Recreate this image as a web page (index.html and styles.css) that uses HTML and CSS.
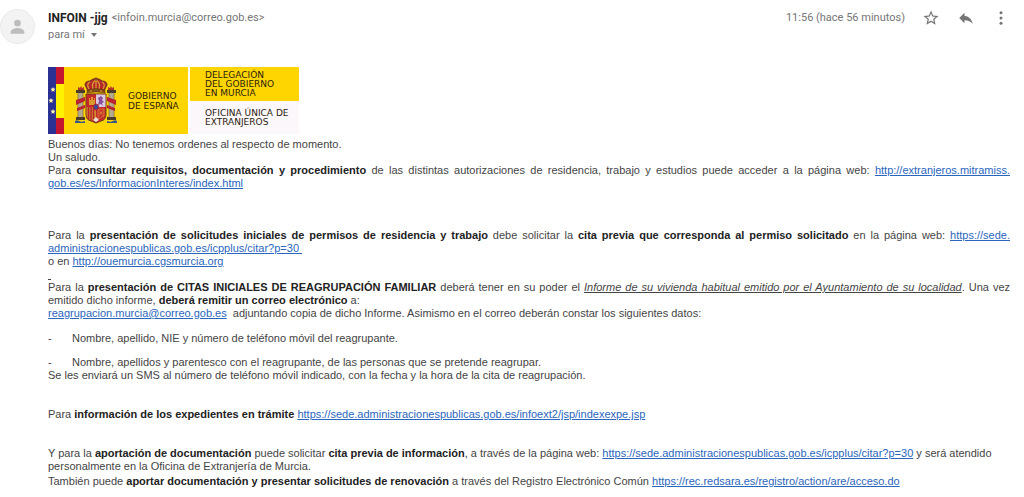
FILE: index.html
```html
<!DOCTYPE html>
<html lang="es">
<head>
    <meta charset="utf-8">
    <title>INFOIN -jjg</title>
    <link rel="stylesheet" href="styles.css">
</head>
<body>
    <header class="mail-header">
        <svg class="avatar" viewBox="0 0 36 36" aria-hidden="true">
            <circle cx="18" cy="18" r="17.5" fill="#f3f3f3" stroke="#e8e8e8"/>
            <circle cx="18" cy="14.500" r="3.500" fill="#bdbdbd"/>
            <path d="M11 25.500v-2c0-2.800 4.600-4 7-4s7 1.200 7 4v2z" fill="#bdbdbd"/>
        </svg>

        <div class="sender">
            <div class="sender-line"><b class="sender-name">INFOIN -jjg</b> <span class="sender-mail">&lt;infoin.murcia@correo.gob.es&gt;</span></div>
            <button type="button" class="details">para mí <span class="caret"></span></button>
        </div>

        <div class="tools">
            <span class="date">11:56 (hace 56 minutos)</span>
            <button type="button" class="icon" aria-label="Destacar">
                <svg viewBox="0 0 24 24"><path d="M22 9.240l-7.190-.62L12 2 9.190 8.630 2 9.240l5.460 4.730L5.820 21 12 17.270 18.180 21l-1.630-7.030L22 9.240zM12 15.400l-3.760 2.270 1-4.280-3.320-2.880 4.380-.38L12 6.100l1.710 4.040 4.380.38-3.320 2.880 1 4.280L12 15.400z"/></svg>
            </button>
            <button type="button" class="icon" aria-label="Responder">
                <svg viewBox="0 0 24 24"><path d="M10 9V5l-7 7 7 7v-4.100c5 0 8.500 1.600 11 5.100-1-5-4-10-11-11z"/></svg>
            </button>
            <button type="button" class="icon" aria-label="Más">
                <svg viewBox="0 0 24 24"><circle cx="12" cy="5" r="2"/><circle cx="12" cy="12" r="2"/><circle cx="12" cy="19" r="2"/></svg>
            </button>
        </div>
    </header>

    <main class="mail-body">
        <div class="logo">
            <div class="logo-left">
                <svg class="flag" viewBox="0 0 16 67" aria-hidden="true">
                    <rect width="9" height="67" fill="#2b3192"/>
                    <rect x="8" width="8" height="67" fill="#fff200"/>
                    <rect x="8" width="8" height="17" fill="#c4162f"/>
                    <rect x="8" y="51" width="8" height="16" fill="#c4162f"/>
                    <g fill="#fff3b0">
                        <path id="star" d="M5 20l.7 1.600 1.800.2-1.300 1.200.4 1.800L5 23.900l-1.600.9.400-1.800-1.300-1.200 1.800-.2z"/>
                        <use href="#star" x="-2" y="11"/>
                        <use href="#star" y="22"/>
                    </g>
                </svg>
                <svg class="shield" viewBox="0 0 44 48" aria-hidden="true">
                    <!-- columns -->
                    <g id="column">
                        <rect x="4" y="15" width="5" height="26" fill="#b5ab90" stroke="#665a3a" stroke-width=".6"/>
                        <rect x="2" y="13" width="9" height="3" fill="#4c3c26"/>
                        <path d="M4 13v-3l2 1 1-2 1 2 2-1v3z" fill="#b5342a"/>
                        <path d="M2 23l9-3v4l-9 4zM3 31l8-3v3l-8 3z" fill="#b8232f"/>
                        <rect x="2" y="40" width="9" height="3" fill="#4c3c26"/>
                        <path d="M1 44q2-1.500 4 0t6 0v2H1z" fill="#35558a"/>
                    </g>
                    <use href="#column" transform="translate(44 0) scale(-1 1)"/>
                    <!-- crown -->
                    <path d="M14 14l-3-6q0-4 5-4 3-3 6-2 3-1 6 2 5 0 5 4l-3 6z" fill="#b5272a" stroke="#6b3a12"/>
                    <path d="M15 12q-3-5 1-7M19 12q-2-6 3-9 5 3 3 9M29 12q3-5-1-7M22 3v10" fill="none" stroke="#d9a032" stroke-width="1.200"/>
                    <path d="M13 13q9-3 18 0v3q-9-2-18 0z" fill="#8b4b18" stroke="#5b300f" stroke-width=".5"/>
                    <path d="M22 0v4M20.500 1.500h3" stroke="#76501a"/>
                    <circle cx="17" cy="14" r=".7" fill="#e8c13a"/><circle cx="22" cy="13.500" r=".7" fill="#3a6b3a"/><circle cx="27" cy="14" r=".7" fill="#e8c13a"/>
                    <!-- quarters -->
                    <path d="M12 17h20v20q0 6-5 7l-5 2-5-2q-5-1-5-7z" fill="#c6262e" stroke="#6a3a1a"/>
                    <path d="M15 28v-7h1v2h1v-3h2v3h1v-2h1v7z" fill="#d99a2b"/>
                    <rect x="22" y="17.500" width="9.500" height="12.500" fill="#d9cbe0"/>
                    <path d="M24 28l1-4-1-3 3-2 2 2-1 2 2 2-2 1 1 3-2-2z" fill="#894f9b"/>
                    <path d="M12.500 30H22v14.500l-5-1.500q-4.500-1-4.500-6z" fill="#d08a2d"/>
                    <path d="M14.500 30v12M17 30v13M19.500 30v14" stroke="#bb252c" stroke-width="1.500"/>
                    <path d="M24 32h6v7l-6 3zM24 32l6 8M30 32l-6 8M24 36h6" fill="none" stroke="#d68a30" stroke-width=".7"/>
                    <path d="M19 43l3-3 3 3-3 2z" fill="#e8dfcf"/>
                    <ellipse cx="22" cy="30" rx="2.500" ry="3" fill="#394b9b" stroke="#b5232b"/>
                </svg>
                <span>GOBIERNO<br>DE ESPAÑA</span>
            </div>
            <div class="logo-right">
                <div class="delegation">DELEGACIÓN<br>DEL GOBIERNO<br>EN MURCIA</div>
                <div class="office">OFICINA ÚNICA DE<br>EXTRANJEROS</div>
            </div>
        </div>

        <p>Buenos días: No tenemos ordenes al respecto de momento.<br>Un saludo.</p>
        <p class="justified">Para <b>consultar requisitos, documentación y procedimiento</b> de las distintas autorizaciones de residencia, trabajo y estudios puede acceder a la página web: <a href="http://extranjeros.mitramiss.gob.es/es/InformacionInteres/index.html">http://extranjeros.mitramiss.<wbr>gob.es/es/InformacionInteres/index.html</a></p>

        <p class="justified space-large">Para la <b>presentación de solicitudes iniciales de permisos de residencia y trabajo</b> debe solicitar la <b>cita previa que corresponda al permiso solicitado</b> en la página web: <a href="https://sede.administracionespublicas.gob.es/icpplus/citar?p=30">https://sede.<wbr>administracionespublicas.gob.es/icpplus/citar?p=30&nbsp;</a></p>
        <p>o en <a href="http://ouemurcia.cgsmurcia.org">http://ouemurcia.cgsmurcia.org</a></p>
        <p><u>&nbsp;</u></p>
        <p class="justified">Para la <b>presentación de CITAS INICIALES DE REAGRUPACIÓN FAMILIAR</b> deberá tener en su poder el <u><i>Informe de su vivienda habitual emitido por el Ayuntamiento de su localidad</i></u>. Una vez emitido dicho informe, <b>deberá remitir un correo electrónico</b> a:</p>
        <p><a href="mailto:reagrupacion.murcia@correo.gob.es">reagrupacion.murcia@correo.gob.es</a>&nbsp; adjuntando copia de dicho Informe. Asimismo en el correo deberán constar los siguientes datos:</p>

        <ul class="requirements">
            <li>Nombre, apellido, NIE y número de teléfono móvil del reagrupante.</li>
            <li>Nombre, apellidos y parentesco con el reagrupante, de las personas que se pretende reagrupar.</li>
        </ul>
        <p>Se les enviará un SMS al número de teléfono móvil indicado, con la fecha y la hora de la cita de reagrupación.</p>

        <p class="space">Para <b>información de los expedientes en trámite</b> <a href="https://sede.administracionespublicas.gob.es/infoext2/jsp/indexexpe.jsp">https://sede.administracionespublicas.gob.es/infoext2/jsp/indexexpe.jsp</a></p>

        <p class="space">Y para la <b>aportación de documentación</b> puede solicitar <b>cita previa de información</b>, a través de la página web: <a href="https://sede.administracionespublicas.gob.es/icpplus/citar?p=30">https://sede.administracionespublicas.gob.es/icpplus/citar?p=30</a> y será atendido personalmente en la Oficina de Extranjería de Murcia.</p>
        <p class="last">También puede <b>aportar documentación y presentar solicitudes de renovación</b> a través del Registro Electrónico Común <a href="https://rec.redsara.es/registro/action/are/acceso.do">https://rec.redsara.es/registro/action/are/acceso.do</a></p>
    </main>
</body>
</html>
```
FILE: styles.css
```css
body {
    margin: 0;
    background: #fff;
    color: #444;
    font-family: "Liberation Sans", Arial, sans-serif;
    font-size: 11px;
    line-height: 13px;
}

button {
    padding: 0;
    border: 0;
    background: none;
    font: inherit;
    color: inherit;
    cursor: pointer;
}

.mail-header {
    display: flex;
    align-items: flex-start;
    padding: 9px 14px 0 0;
    font-family: Roboto, Arial, sans-serif;
    color: #757575;
}

.avatar {
    width: 35px;
    height: 35px;
    margin-right: 13px;
}

.sender {
    flex: 1;
    line-height: 18px;
}

.sender-line {
    display: flex;
    gap: 4px;
}

.sender-name {
    font-size: 12px;
    color: #222;
}

.details {
    display: flex;
    align-items: center;
    gap: 6px;
    line-height: 16px;
}

.caret {
    border: 3px solid transparent;
    border-top: 4px solid #757575;
    border-bottom: 0;
}

.tools {
    display: flex;
    align-items: center;
    gap: 17px;
    line-height: 18px;
}

.icon {
    display: flex;
}

.icon svg {
    width: 18px;
    height: 18px;
    fill: #757575;
}

.mail-body {
    padding: 23px 14px 0 48px;
}

.logo {
    display: flex;
    width: 251px;
    height: 67px;
    margin-bottom: 4px;
    gap: 2px;
    font-family: "DejaVu Sans", Verdana, sans-serif;
    font-size: 9px;
    line-height: 9px;
    color: #2b220c;
}

.logo-left {
    display: flex;
    align-items: center;
    width: 140px;
    background: #fed500;
}

.flag {
    width: 16px;
    height: 67px;
}

.shield {
    width: 44px;
    height: 48px;
    margin: 0 10px;
}

.logo-left span {
    white-space: nowrap;
    line-height: 10px;
}

.logo-right {
    flex: 1;
    display: flex;
    flex-direction: column;
}

.delegation {
    padding: 4px 0 3px 15px;
    background: #fed500;
}

.office {
    flex: 1;
    padding: 8px 0 0 15px;
    background: #fcf7fa;
    white-space: nowrap;
}

p {
    margin: 0;
}

b {
    color: #222;
}

a {
    color: #2a66bd;
}

.justified {
    text-align: justify;
}

.space {
    margin-top: 26px;
}

.space-large {
    margin-top: 39px;
}

.requirements {
    margin: 0;
    padding: 1px 0 0;
    list-style: none;
}

.requirements li {
    display: flex;
    margin-top: 11px;
}

.requirements li::before {
    content: "-";
    width: 24px;
}

.last {
    margin-top: 2px;
}
```
